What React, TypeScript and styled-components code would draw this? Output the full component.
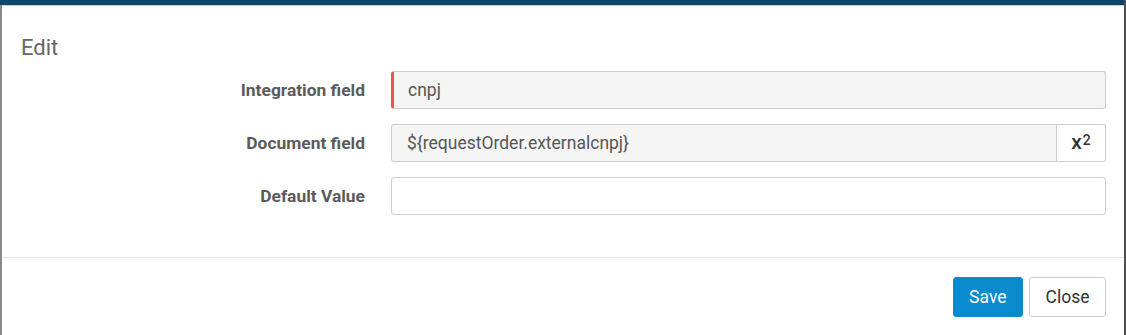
import styled, { createGlobalStyle } from "styled-components";

const GlobalStyle = createGlobalStyle`
    html, body {
        margin: 0;
        padding: 0;
        background: #7d7d7d;
    }
    * {
        box-sizing: border-box;
    }
`

const Screen = styled.div`
    width: 1126px;
    height: 335px;
    overflow: hidden;
    display: flex;
    padding: 5px 0 0 2px;
    background: linear-gradient(#0c4668 0, #0c4668 5px, #8a8a8a 5px, #8a8a8a 100%);
    border-right: 2px solid #4f4f4f;
    font-family: Roboto, "Liberation Sans", Arial, sans-serif;
`

const Modal = styled.div`
    flex: 1;
    background: #fff;
    border-top: 1px solid #c8cdd1;
    display: flex;
    flex-direction: column;
`

const Header = styled.div`
    padding: 30px 19px 0 19px;
`

const Title = styled.h4`
    margin: 0;
    font-size: 22px;
    line-height: 24px;
    font-weight: 400;
    color: #666;
`

const Body = styled.div`
    display: grid;
    grid-template-columns: 363px 1fr;
    column-gap: 26px;
    row-gap: 15px;
    padding: 11px 18px 42px 0;
    border-bottom: 1px solid #e5e5e5;
`

const Label = styled.label`
    display: flex;
    align-items: center;
    justify-content: flex-end;
    font-size: 17.4px;
    font-weight: 700;
    color: #5b5b5b;
    height: 38px;
`

const InputGroup = styled.div`
    display: flex;
    height: 38px;
`

const Input = styled.input<{ $required?: boolean; $readOnly?: boolean; $grouped?: boolean }>`
    flex: 1;
    min-width: 0;
    height: 38px;
    margin: 0;
    font-family: inherit;
    font-size: 17.5px;
    color: #555;
    background: ${p => (p.$readOnly ? "#f5f5f5" : "#fff")};
    border: 1px solid #ccc;
    border-left: ${p => (p.$required ? "3px solid #f0505a" : "1px solid #ccc")};
    border-radius: ${p => (p.$grouped ? "3px 0 0 3px" : "3px")};
    padding: 0 15px 0 ${p => (p.$required ? "14px" : "15px")};
    outline: none;
`

const AddonButton = styled.button`
    width: 49px;
    height: 38px;
    margin: 0;
    padding: 0 0 2px 0;
    background: #fff;
    border: 1px solid #ccc;
    border-left: none;
    border-radius: 0 3px 3px 0;
    font-family: inherit;
    font-size: 21px;
    font-weight: 500;
    color: #333;
    display: flex;
    align-items: center;
    justify-content: center;

    sup {
        font-size: 14px;
        position: relative;
        top: -2px;
        margin-left: 1px;
    }
`

const Footer = styled.div`
    display: flex;
    justify-content: flex-end;
    gap: 6px;
    padding: 19px 18px 0 0;
`

const Button = styled.button<{ $primary?: boolean }>`
    height: 40px;
    padding: 0 15.5px;
    font-family: inherit;
    font-size: 17.5px;
    border-radius: 3px;
    border: 1px solid ${p => (p.$primary ? "#0a8bcd" : "#ccc")};
    background: ${p => (p.$primary ? "#0a8bcd" : "#fff")};
    color: ${p => (p.$primary ? "#fff" : "#333")};
`

export default function App() {
    return (
        <>
            <GlobalStyle/>
            <Screen>
                <Modal>
                    <Header>
                        <Title>Edit</Title>
                    </Header>
                    <Body>
                        <Label>Integration field</Label>
                        <InputGroup>
                            <Input $required $readOnly readOnly value="cnpj"/>
                        </InputGroup>

                        <Label>Document field</Label>
                        <InputGroup>
                            <Input $readOnly $grouped readOnly value="${requestOrder.externalcnpj}"/>
                            <AddonButton>x<sup>2</sup></AddonButton>
                        </InputGroup>

                        <Label>Default Value</Label>
                        <InputGroup>
                            <Input defaultValue=""/>
                        </InputGroup>
                    </Body>
                    <Footer>
                        <Button $primary>Save</Button>
                        <Button>Close</Button>
                    </Footer>
                </Modal>
            </Screen>
        </>
    )
}
